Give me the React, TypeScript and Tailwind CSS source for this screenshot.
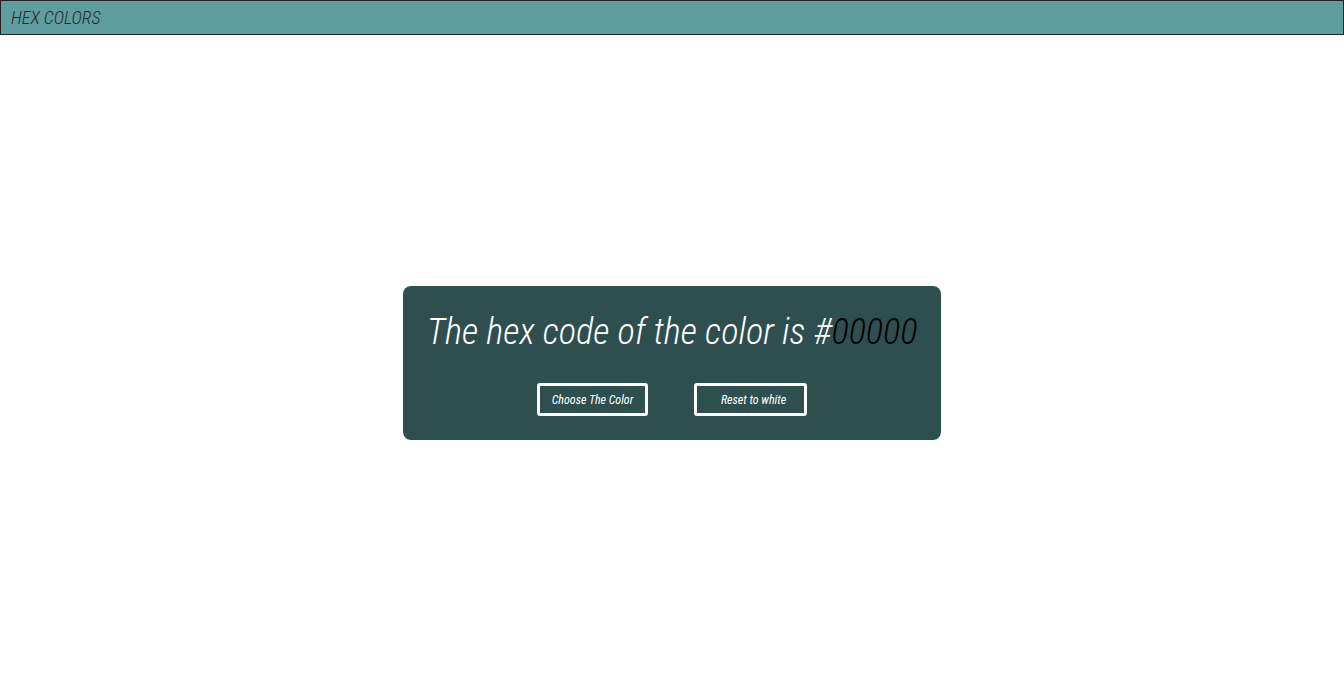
export default function App() {
  return (
    <div className="min-h-screen bg-white" style={{ fontFamily: "Roboto, 'Liberation Sans', sans-serif" }}>
      {/* Header */}
      <header className="h-[35px] border border-[#222] bg-[#5f9ea0] flex items-center px-[10px]">
        <h1 className="text-[18px] italic font-light font-stretch-condensed text-[#1f2a2a]">HEX COLORS</h1>
      </header>

      {/* Card */}
      <div className="flex justify-center pt-[251px]">
        <div className="w-[538px] h-[154px] rounded-[8px] bg-[#2f4f4f] flex flex-col items-center pt-[22px]">
          <p className="text-[36.4px] leading-[48px] italic font-light font-stretch-condensed text-white">
            The hex code of the color is #<span className="text-black">00000</span>
          </p>
          <div className="flex gap-[46px] mt-[27px]">
            <button className="w-[111px] h-[33px] border-[3px] border-white rounded-[3px] text-[12px] italic font-normal font-stretch-condensed text-white">
              Choose The Color
            </button>
            <button className="w-[113px] h-[33px] border-[3px] border-white rounded-[3px] text-[12px] italic font-normal font-stretch-condensed text-white pl-[6px]">
              Reset to white
            </button>
          </div>
        </div>
      </div>
    </div>
  );
}
